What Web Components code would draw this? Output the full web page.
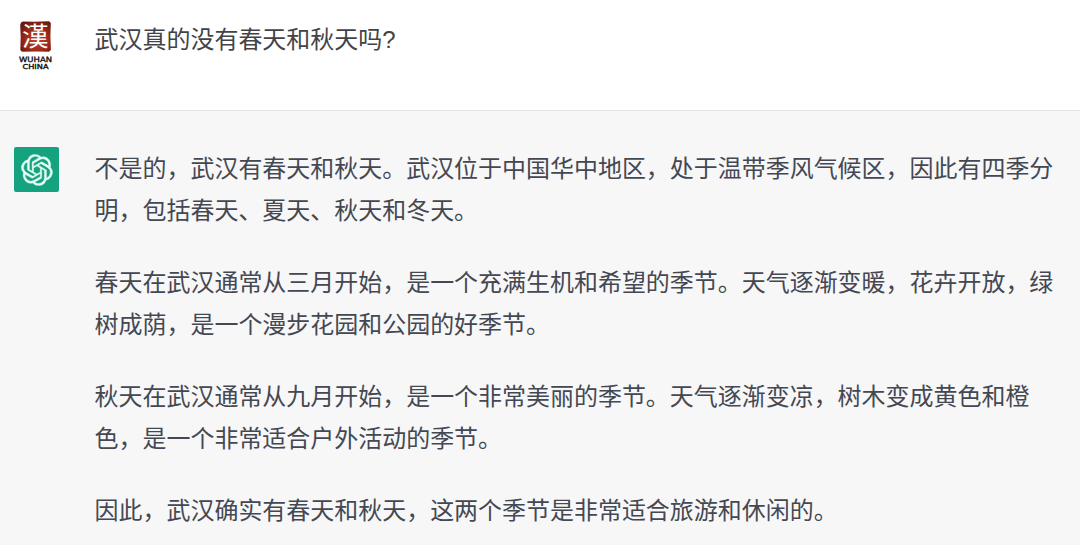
<!DOCTYPE html>
<html lang="zh-CN">
<head>
<meta charset="utf-8">
<title>Chat</title>
<style>
  body {
    margin: 0;
    height: 545px;
    overflow: hidden;
    background: #f7f7f8;
    font-family: "Liberation Sans", "Noto Sans CJK SC", sans-serif;
  }
</style>
</head>
<body>
<chat-thread>
  <chat-message role="user">
    <wuhan-avatar slot="avatar"></wuhan-avatar>
    <p>武汉真的没有春天和秋天吗?</p>
  </chat-message>
  <chat-message role="assistant">
    <bot-avatar slot="avatar"></bot-avatar>
    <p>不是的，武汉有春天和秋天。武汉位于中国华中地区，处于温带季风气候区，因此有四季分明，包括春天、夏天、秋天和冬天。</p>
    <p>春天在武汉通常从三月开始，是一个充满生机和希望的季节。天气逐渐变暖，花卉开放，绿树成荫，是一个漫步花园和公园的好季节。</p>
    <p>秋天在武汉通常从九月开始，是一个非常美丽的季节。天气逐渐变凉，树木变成黄色和橙色，是一个非常适合户外活动的季节。</p>
    <p>因此，武汉确实有春天和秋天，这两个季节是非常适合旅游和休闲的。</p>
  </chat-message>
</chat-thread>

<script>
// <chat-thread>
class ChatThread extends HTMLElement {
  constructor() {
    super();

    this.attachShadow({mode: 'open'});
  }

  connectedCallback() {
    this.shadowRoot.innerHTML = `
      <style>
        :host {
          display: flex;
          flex-direction: column;
        }
      </style>
      <slot></slot>
    `;
  }
}

// <chat-message role="user|assistant">
class ChatMessage extends HTMLElement {
  constructor() {
    super();

    this.attachShadow({mode: 'open'});
  }

  connectedCallback() {
    this.shadowRoot.innerHTML = `
      <style>
        :host {
          display: flex;
          gap: 35.6px;
          box-sizing: border-box;
          padding: 37px 20px 37px 14px;
          background: #f7f7f8;
          color: #444852;
        }
        :host([role="user"]) {
          height: 111px;
          padding-top: 19px;
          background: #fff;
          border-bottom: 1px solid #e4e4e5;
          color: #434347;
        }
        .avatar {
          flex: 0 0 45px;
        }
        .content {
          flex: 0 0 962px;
          display: flex;
          flex-direction: column;
          gap: 30px;
        }
        ::slotted(p) {
          margin: 0;
          font-size: 23.98px;
          line-height: 42px;
          line-break: strict;
          text-spacing-trim: space-all;
        }
      </style>
      <div class="avatar"><slot name="avatar"></slot></div>
      <div class="content"><slot></slot></div>
    `;
  }
}

// <wuhan-avatar>: red seal with the city name below
class WuhanAvatar extends HTMLElement {
  constructor() {
    super();

    this.attachShadow({mode: 'open'});
  }

  connectedCallback() {
    this.shadowRoot.innerHTML = `
      <style>
        :host {
          display: block;
          margin-top: -1px;
        }
        svg {
          display: block;
          overflow: visible;
        }
      </style>
      <svg width="45" height="56" viewBox="0 0 45 56">
        <defs>
          <radialGradient id="seal" cx=".55" cy=".6" r=".7">
            <stop offset="0" stop-color="#c2492a"/>
            <stop offset=".55" stop-color="#9c2a18"/>
            <stop offset="1" stop-color="#641610"/>
          </radialGradient>
        </defs>
        <path d="M7 4.5 9 3.4 20 3.8 35 3.3 36.8 5 36.4 18 36.9 32 35 33.8 22 33.4 8 33.8 6.3 32 6.7 19 6.2 7Z" fill="url(#seal)"/>
        <text x="8" y="28.4" font-family="Noto Sans CJK TC, sans-serif" font-size="26.5" fill="#fff">漢</text>
        <g font-family="DejaVu Sans, sans-serif" fill="#111" stroke="#111" stroke-width=".35">
          <text x="5" y="44.3" font-size="7.2" textLength="33" lengthAdjust="spacingAndGlyphs">WUHAN</text>
          <text x="8.5" y="51.3" font-size="6.8" textLength="26" lengthAdjust="spacingAndGlyphs">CHINA</text>
        </g>
      </svg>
    `;
  }
}

// <bot-avatar>: white knot on a green tile
class BotAvatar extends HTMLElement {
  constructor() {
    super();

    this.attachShadow({mode: 'open'});
  }

  connectedCallback() {
    this.shadowRoot.innerHTML = `
      <style>
        :host {
          display: flex;
          align-items: center;
          justify-content: center;
          width: 45px;
          height: 45px;
          margin-top: -1px;
          border-radius: 2px;
          background: #15a37f;
        }
      </style>
      <svg width="32" height="32" viewBox="0 0 41 41" fill="#e4fff7" stroke="#e4fff7" stroke-width=".5">
        <path d="M37.532 16.87a9.963 9.963 0 0 0-.856-8.184 10.078 10.078 0 0 0-10.855-4.835A9.964 9.964 0 0 0 18.306.5a10.079 10.079 0 0 0-9.614 6.977 9.967 9.967 0 0 0-6.664 4.834 10.08 10.08 0 0 0 1.24 11.817 9.965 9.965 0 0 0 .856 8.185 10.079 10.079 0 0 0 10.855 4.835 9.965 9.965 0 0 0 7.516 3.35 10.078 10.078 0 0 0 9.617-6.981 9.967 9.967 0 0 0 6.663-4.834 10.079 10.079 0 0 0-1.243-11.813ZM22.498 37.886a7.474 7.474 0 0 1-4.799-1.735c.061-.033.168-.091.237-.134l7.964-4.6a1.294 1.294 0 0 0 .655-1.134V19.054l3.366 1.944a.12.12 0 0 1 .066.092v9.299a7.505 7.505 0 0 1-7.49 7.496ZM6.392 31.006a7.471 7.471 0 0 1-.894-5.023c.06.036.162.099.237.141l7.964 4.6a1.297 1.297 0 0 0 1.308 0l9.724-5.614v3.888a.12.12 0 0 1-.048.103l-8.051 4.649a7.504 7.504 0 0 1-10.24-2.744ZM4.297 13.62A7.469 7.469 0 0 1 8.2 10.333c0 .068-.004.19-.004.274v9.201a1.294 1.294 0 0 0 .654 1.132l9.723 5.614-3.366 1.944a.12.12 0 0 1-.114.01L7.04 23.856a7.504 7.504 0 0 1-2.743-10.237Zm27.658 6.437-9.724-5.615 3.367-1.943a.121.121 0 0 1 .113-.01l8.052 4.648a7.498 7.498 0 0 1-1.158 13.528v-9.476a1.293 1.293 0 0 0-.65-1.132Zm3.35-5.043c-.059-.037-.162-.099-.236-.141l-7.965-4.6a1.298 1.298 0 0 0-1.308 0l-9.723 5.614v-3.888a.12.12 0 0 1 .048-.103l8.05-4.645a7.497 7.497 0 0 1 11.135 7.763Zm-21.063 6.929-3.367-1.944a.12.12 0 0 1-.065-.092v-9.299a7.497 7.497 0 0 1 12.293-5.756 6.94 6.94 0 0 0-.236.134l-7.965 4.6a1.294 1.294 0 0 0-.654 1.132l-.006 11.225Zm1.829-3.943 4.33-2.501 4.332 2.5v5l-4.331 2.5-4.331-2.5V18Z"/>
      </svg>
    `;
  }
}

customElements.define('chat-thread', ChatThread);
customElements.define('chat-message', ChatMessage);
customElements.define('wuhan-avatar', WuhanAvatar);
customElements.define('bot-avatar', BotAvatar);
</script>
</body>
</html>
